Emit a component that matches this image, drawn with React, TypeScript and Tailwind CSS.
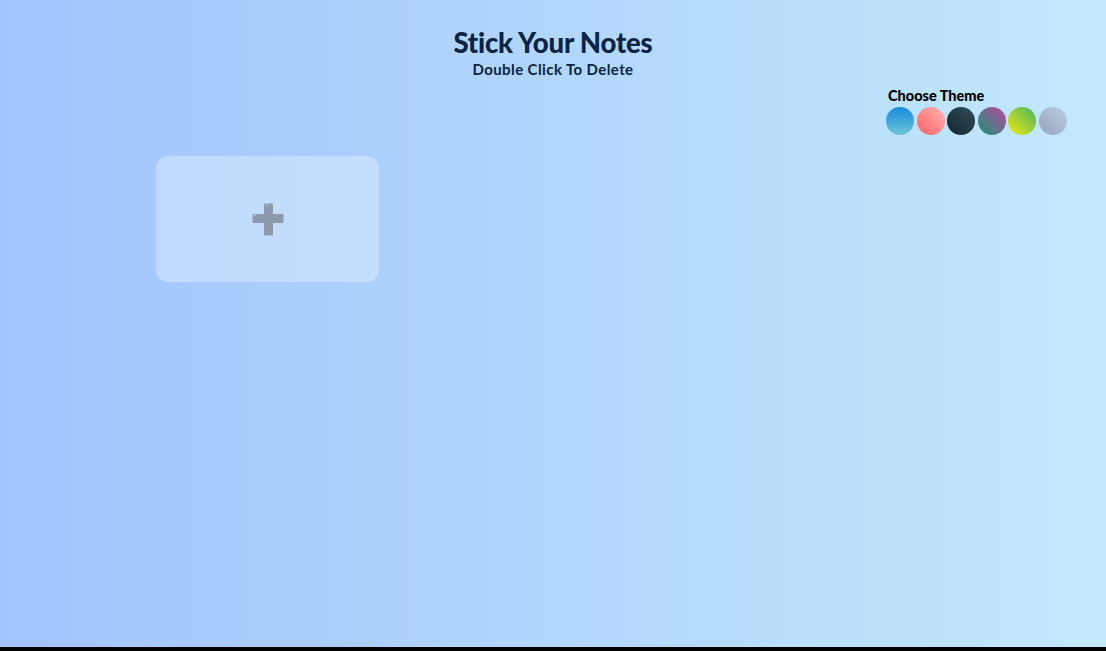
const THEMES = [
  "bg-[linear-gradient(to_bottom,#168ce0,#6fc6d3)]",
  "bg-[linear-gradient(to_top_right,#ff6161,#ffb4b4)]",
  "bg-[linear-gradient(to_top_right,#17252f,#2f4e5a)]",
  "bg-[linear-gradient(to_top_right,#1d9479,#b8479c)]",
  "bg-[linear-gradient(to_top_right,#f0e812,#48b563)]",
  "bg-[linear-gradient(to_top_right,#95a3bd,#bccde0)]",
];

function PlusIcon() {
  return (
    <svg width="32" height="33" viewBox="0 0 32 33" aria-hidden="true">
      <path
        d="M12 1.5a1 1 0 0 1 1-1h7a1 1 0 0 1 1 1V11h9.5a1 1 0 0 1 1 1v7a1 1 0 0 1-1 1H21v11.5a1 1 0 0 1-1 1h-7a1 1 0 0 1-1-1V20H1.5a1 1 0 0 1-1-1v-7a1 1 0 0 1 1-1H12z"
        fill="#8e9aab"
      />
      <path d="M14 2.5l2-1" stroke="#c3cedc" strokeWidth="1" />
      <path d="M2 13l2-1" stroke="#c3cedc" strokeWidth="1" />
    </svg>
  );
}

export default function App() {
  return (
    <div className="h-[651px] bg-black font-['Lato','Liberation_Sans',sans-serif]">
      <div className="h-[647px] bg-[linear-gradient(to_right,#a1c4fd,#c2e9fb)] flex flex-col">
        {/* Header */}
        <header className="pt-[27px] flex flex-col items-center text-[#0b2344]">
          <h1 className="text-[27.5px] font-black leading-[32px] tracking-[-0.2px]">
            Stick Your Notes
          </h1>
          <p className="text-[15px] font-bold leading-[17px] mt-[2px] tracking-[0.4px]">
            Double Click To Delete
          </p>
        </header>

        {/* Theme picker */}
        <div className="flex justify-end pr-[39px] mt-[10px]">
          <div className="flex flex-col">
            <span className="text-[14.5px] font-black text-black leading-[16px] pl-[2px]">
              Choose Theme
            </span>
            <div className="flex gap-[2.6px] mt-[3px]">
              {THEMES.map((t) => (
                <button key={t} className={`w-[28px] h-[28px] rounded-full ${t}`} />
              ))}
            </div>
          </div>
        </div>

        {/* Notes */}
        <div className="pl-[156px] mt-[21px] flex flex-wrap gap-4">
          <button className="w-[223px] h-[126px] rounded-[12px] bg-white/30 flex items-center justify-center">
            <PlusIcon />
          </button>
        </div>
      </div>
    </div>
  );
}
